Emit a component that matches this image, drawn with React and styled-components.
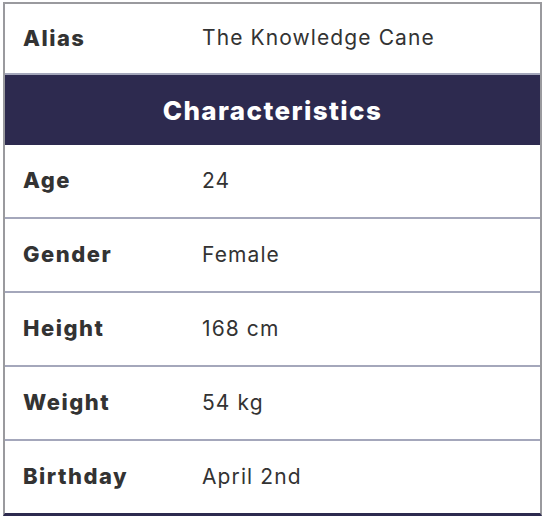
import React from "react";
import styled, { createGlobalStyle } from "styled-components";

const GlobalStyle = createGlobalStyle`
  body {
    margin: 0;
    background: #fff;
    font-family: Inter, "Open Sans", sans-serif;
  }
`;

const rows = [
  { label: "Age", value: "24" },
  { label: "Gender", value: "Female" },
  { label: "Height", value: "168 cm" },
  { label: "Weight", value: "54 kg" },
  { label: "Birthday", value: "April 2nd" },
];

function App() {
  return (
    <>
      <GlobalStyle />
      <Wrap>
        <Card>
          <Row $height={69}>
            <Label>Alias</Label>
            <Value>The Knowledge Cane</Value>
          </Row>
          <Heading>Characteristics</Heading>
          {rows.map((row) => (
            <Row key={row.label} $height={72}>
              <Label>{row.label}</Label>
              <Value>{row.value}</Value>
            </Row>
          ))}
        </Card>
      </Wrap>
    </>
  );
}

export default App;

const Wrap = styled.div`
  padding: 2px 2px 0 3px;
`;

const Card = styled.div`
  width: 535px;
  display: flex;
  flex-direction: column;
  border: 2px solid #9a9a9e;
  border-bottom: 3px solid #2d2a4f;
  color: #2e2e30;
`;

const Row = styled.div`
  height: ${(props) => props.$height}px;
  display: flex;
  align-items: center;
  border-bottom: 2px solid #a4a7bb;

  &:last-child {
    border-bottom: none;
  }
`;

const Label = styled.div`
  width: 179px;
  padding-left: 18px;
  margin-top: -2px;
  font-size: 22px;
  font-weight: 800;
  letter-spacing: 1.5px;
  color: #333;
`;

const Value = styled.div`
  margin-top: -2px;
  font-size: 21px;
  font-weight: 400;
  letter-spacing: 1.1px;
  color: #333;
`;

const Heading = styled.div`
  height: 70px;
  display: flex;
  align-items: center;
  justify-content: center;
  background: #2d2a4f;
  color: #fff;
  font-size: 26px;
  font-weight: 800;
  letter-spacing: 1.4px;
`;
